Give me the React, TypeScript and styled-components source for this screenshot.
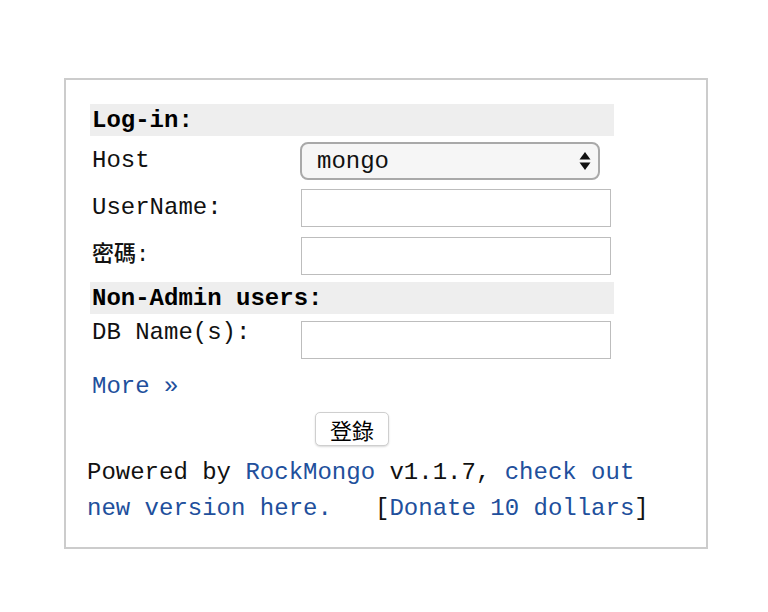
import React from "react";
import styled, { createGlobalStyle } from "styled-components";

const Global = createGlobalStyle`
  html, body { margin: 0; padding: 0; background: #fff; }
  body { font-family: "Liberation Mono", "Noto Sans CJK TC", monospace; color: #111; }
`;

const Box = styled.div`
  box-sizing: border-box;
  width: 644px;
  margin: 78px 0 0 64px;
  border: 2px solid #cccccc;
  padding: 24px 0 20px 24px;
`;

const Form = styled.div`
  width: 524px;
  display: flex;
  flex-direction: column;
`;

const Header = styled.div`
  height: 32px;
  background: #eeeeee;
  display: flex;
  align-items: center;
  padding-left: 2px;
  font-size: 24px;
  font-weight: bold;
  color: #000;
`;

const Row = styled.div<{ $pt: number; $pb: number }>`
  display: grid;
  grid-template-columns: 210px 1fr;
  align-items: start;
  padding: ${(p) => p.$pt}px 0 ${(p) => p.$pb}px;
`;

const Label = styled.div<{ $cjk?: boolean }>`
  padding-left: 2px;
  height: 38px;
  line-height: 38px;
  font-size: ${(p) => (p.$cjk ? "22px" : "24px")};
  font-weight: ${(p) => (p.$cjk ? 500 : 400)};
  color: #111;
`;

const Field = styled.div<{ $mt?: number }>`
  margin-top: ${(p) => p.$mt ?? 0}px;
  position: relative;
`;

const Input = styled.input`
  box-sizing: border-box;
  display: block;
  width: 310px;
  height: 38px;
  margin-left: 1px;
  border: 1px solid #bdbdbd;
  background: #fff;
  font-family: inherit;
  font-size: 20px;
  outline: none;
`;

const SelectWrap = styled.div`
  position: relative;
  width: 300px;
  height: 38px;
`;

const Select = styled.select`
  box-sizing: border-box;
  appearance: none;
  -webkit-appearance: none;
  width: 300px;
  height: 38px;
  border: 2px solid #a9a9a9;
  border-radius: 8px;
  background: #f6f6f6;
  padding: 0 0 0 15px;
  font-family: "Liberation Mono", monospace;
  font-size: 24px;
  color: #111;
  outline: none;
`;

const Arrows = styled.svg`
  position: absolute;
  right: 9px;
  top: 9px;
  pointer-events: none;
`;

const MoreLink = styled.a`
  display: block;
  margin-top: 10px;
  padding-left: 2px;
  font-size: 24px;
  line-height: 36px;
  color: #214f9c;
  text-decoration: none;
`;

const ButtonRow = styled.div`
  display: flex;
  justify-content: center;
  margin-top: 7px;
`;

const Button = styled.button`
  box-sizing: border-box;
  height: 34px;
  padding: 0 14px;
  border: 1px solid #cfcfcf;
  border-radius: 5px;
  background: #fff;
  box-shadow: 0 1px 2px rgba(0, 0, 0, 0.15);
  font-family: "Noto Sans CJK TC", sans-serif;
  font-size: 22px;
  color: #000;
  line-height: 30px;
`;

const Footer = styled.div`
  width: 570px;
  margin: 9px 0 0 -3px;
  font-size: 24px;
  line-height: 36px;
  color: #111;
`;

const Link = styled.a`
  color: #214f9c;
  text-decoration: none;
`;

export default function App() {
  return (
    <>
      <Global />
      <Box>
        <Form>
          <Header>Log-in:</Header>
          <Row $pt={6} $pb={4}>
            <Label>Host</Label>
            <Field>
              <SelectWrap>
                <Select defaultValue="mongo">
                  <option value="mongo">mongo</option>
                </Select>
                <Arrows width="12" height="20" viewBox="0 0 12 20">
                  <path d="M6 1 L11.5 8.5 L0.5 8.5 Z" fill="#111" />
                  <path d="M6 19 L11.5 11.5 L0.5 11.5 Z" fill="#111" />
                </Arrows>
              </SelectWrap>
            </Field>
          </Row>
          <Row $pt={5} $pb={5}>
            <Label>UserName:</Label>
            <Field>
              <Input type="text" />
            </Field>
          </Row>
          <Row $pt={5} $pb={7}>
            <Label $cjk>密碼:</Label>
            <Field>
              <Input type="password" />
            </Field>
          </Row>
          <Header>Non-Admin users:</Header>
          <Row $pt={0} $pb={0}>
            <Label>DB Name(s):</Label>
            <Field $mt={7}>
              <Input type="text" />
            </Field>
          </Row>
          <MoreLink href="#">More »</MoreLink>
          <ButtonRow>
            <Button>登錄</Button>
          </ButtonRow>
        </Form>
        <Footer>
          Powered by <Link href="#">RockMongo</Link> v1.1.7,{" "}
          <Link href="#">check out new version here.</Link>
          {"\u00a0\u00a0 "}[<Link href="#">Donate 10 dollars</Link>]
        </Footer>
      </Box>
    </>
  );
}
